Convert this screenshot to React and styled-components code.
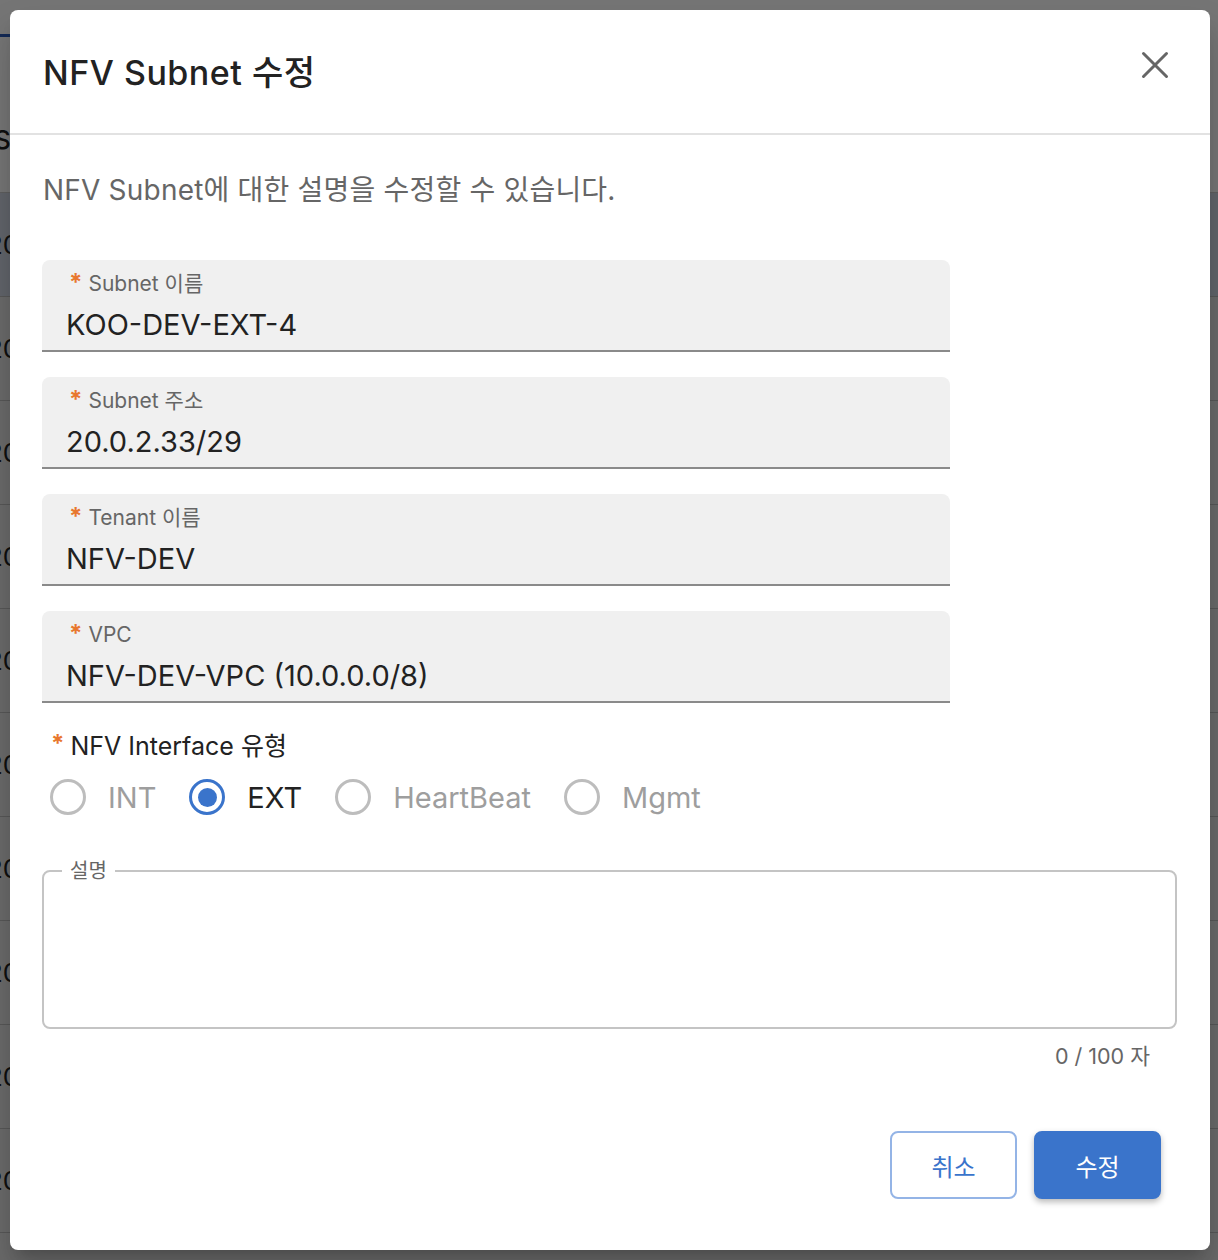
import React from 'react';
import styled, { createGlobalStyle } from 'styled-components';

const Global = createGlobalStyle`
  html, body { margin: 0; padding: 0; }
  body {
    font-family: Inter, "Noto Sans CJK KR", "Noto Sans", sans-serif;
    background: #fff;
    -webkit-font-smoothing: antialiased;
  }
  * { box-sizing: border-box; }
`;

/* ---------- page behind the dialog ---------- */
const Page = styled.div`
  position: relative;
  width: 1218px;
  height: 1260px;
  overflow: hidden;
  background: #fff;
`;

const TabBar = styled.div`
  height: 100px;
  padding-top: 34px;
`;

const TabUnderline = styled.div`
  width: 12px;
  height: 3px;
  background: #2a5bb8;
`;

const TableHead = styled.div`
  height: 93px;
  padding-top: 24px;
  font-size: 26px;
  line-height: 32px;
  font-weight: 500;
  color: #222;
  border-bottom: 1px solid #ccc;
  & > span { display: inline-block; margin-left: -6px; }
`;

const TableRow = styled.div`
  height: 104px;
  display: flex;
  align-items: center;
  background: ${p => (p.$selected ? '#d3d9e6' : '#e6e6e6')};
  border-bottom: 1px solid #bdbdbd;
  font-size: 26px;
  color: #222;
  & > span { margin-left: -13px; }
`;

const Backdrop = styled.div`
  position: absolute;
  inset: 0;
  background: rgba(0, 0, 0, 0.54);
`;

/* ---------- dialog ---------- */
const Dialog = styled.div`
  position: absolute;
  top: 10px;
  left: 10px;
  width: 1200px;
  height: 1240px;
  background: #fff;
  border-radius: 8px;
  box-shadow: 0 11px 15px -7px rgba(0, 0, 0, 0.2), 0 24px 38px 3px rgba(0, 0, 0, 0.14);
  display: flex;
  flex-direction: column;
`;

const Header = styled.div`
  height: 125px;
  flex: none;
  display: flex;
  align-items: center;
  justify-content: space-between;
  padding: 0 35px 0 33px;
  border-bottom: 2px solid #e2e2e2;
`;

const Title = styled.h2`
  margin: 0 0 2px 0;
  font-size: 34px;
  font-weight: 500;
  color: #222;
  letter-spacing: 0.5px;
`;

const CloseButton = styled.button`
  width: 40px;
  height: 40px;
  border: none;
  background: transparent;
  padding: 0;
  margin-top: -14px;
  display: flex;
  align-items: center;
  justify-content: center;
  cursor: pointer;
`;

const Body = styled.div`
  flex: 1;
  display: flex;
  flex-direction: column;
  padding: 36px 33px 0 32px;
`;

const Intro = styled.p`
  margin: 0 0 51px 1px;
  font-size: 28px;
  line-height: 38px;
  color: #666;
  letter-spacing: 0.2px;
`;

const FieldList = styled.div`
  display: flex;
  flex-direction: column;
  gap: 25px;
  width: 908px;
`;

const FilledField = styled.div`
  height: 92px;
  background: #f0f0f0;
  border-radius: 8px 8px 0 0;
  border-bottom: 2px solid #8a8a8a;
  padding: 12px 24px 0 24px;
  display: flex;
  flex-direction: column;
  gap: 12px;
`;

const FieldLabel = styled.div`
  display: flex;
  align-items: flex-start;
  font-size: 21px;
  line-height: 24px;
  color: #666;
  white-space: nowrap;
`;

const Star = styled.span`
  color: #e8772e;
  font-weight: 700;
  margin: ${p => p.$top || -1}px ${p => p.$gap || 6}px 0 ${p => p.$indent || 3}px;
  font-size: ${p => p.$size || 24}px;
  line-height: 1;
`;

const FieldValue = styled.div`
  font-size: 29px;
  line-height: 34px;
  color: #222;
  white-space: nowrap;
`;

const GroupLabel = styled.div`
  display: flex;
  align-items: flex-start;
  margin-top: 28px;
  font-size: 25px;
  line-height: 30px;
  color: #222;
  padding-left: 6px;
`;

const RadioRow = styled.div`
  margin-top: 18px;
  display: flex;
  align-items: center;
  gap: 33px;
  padding-left: 8px;
  height: 36px;
`;

const RadioItem = styled.label`
  display: flex;
  align-items: center;
  gap: 22px;
  font-size: 29px;
  color: ${p => (p.$active ? '#222' : '#9e9e9e')};
  cursor: pointer;
`;

const RadioCircle = styled.span`
  width: 36px;
  height: 36px;
  border-radius: 50%;
  border: 3.5px solid ${p => (p.$checked ? '#3a74cb' : '#bdbdbd')};
  display: flex;
  align-items: center;
  justify-content: center;
  flex: none;
  &::after {
    content: '';
    width: 19px;
    height: 19px;
    border-radius: 50%;
    background: #3a74cb;
    display: ${p => (p.$checked ? 'block' : 'none')};
  }
`;

const TextAreaBox = styled.fieldset`
  margin: 44px 0 0 0;
  padding: 0;
  height: 170px;
  border: 2px solid #c4c4c4;
  border-radius: 8px;
  width: 1135px;
`;

const Legend = styled.legend`
  margin-left: 18px;
  padding: 0 8px;
  font-size: 20px;
  line-height: 24px;
  color: #666;
`;

const Counter = styled.div`
  width: 1135px;
  margin-top: 14px;
  padding-right: 27px;
  text-align: right;
  font-size: 21.5px;
  line-height: 26px;
  color: #666;
`;

const Actions = styled.div`
  margin-top: 62px;
  display: flex;
  justify-content: flex-end;
  gap: 17px;
  padding-right: 16px;
`;

const Button = styled.button`
  width: 127px;
  height: 68px;
  border-radius: 8px;
  font-family: inherit;
  font-size: 24px;
  cursor: pointer;
  border: 2px solid ${p => (p.$primary ? '#3a74cb' : '#94b4e6')};
  background: ${p => (p.$primary ? '#3a74cb' : '#fff')};
  color: ${p => (p.$primary ? '#fff' : '#3a74cb')};
  box-shadow: ${p => (p.$primary ? '0 3px 6px rgba(0,0,0,0.28)' : 'none')};
`;

const fields = [
  { label: 'Subnet 이름', value: 'KOO-DEV-EXT-4' },
  { label: 'Subnet 주소', value: '20.0.2.33/29' },
  { label: 'Tenant 이름', value: 'NFV-DEV' },
  { label: 'VPC', value: 'NFV-DEV-VPC (10.0.0.0/8)' },
];

const radios = [
  { label: 'INT', checked: false },
  { label: 'EXT', checked: true },
  { label: 'HeartBeat', checked: false },
  { label: 'Mgmt', checked: false },
];

export default function App() {
  return (
    <Page>
      <Global />
      <TabBar>
        <TabUnderline />
      </TabBar>
      <TableHead><span>Su</span></TableHead>
      {Array.from({ length: 11 }).map((_, i) => (
        <TableRow key={i} $selected={i === 0}><span>20</span></TableRow>
      ))}
      <Backdrop />
      <Dialog role="dialog">
        <Header>
          <Title>NFV Subnet 수정</Title>
          <CloseButton aria-label="close">
            <svg width="30" height="30" viewBox="0 0 30 30">
              <path d="M3.5 3.5 L26.5 26.5 M26.5 3.5 L3.5 26.5" stroke="#666" strokeWidth="3" strokeLinecap="round" fill="none" />
            </svg>
          </CloseButton>
        </Header>
        <Body>
          <Intro>NFV Subnet에 대한 설명을 수정할 수 있습니다.</Intro>
          <FieldList>
            {fields.map(f => (
              <FilledField key={f.label}>
                <FieldLabel><Star>*</Star>{f.label}</FieldLabel>
                <FieldValue>{f.value}</FieldValue>
              </FilledField>
            ))}
          </FieldList>
          <GroupLabel><Star $indent={3} $size={24} $top={1} $gap={6}>*</Star>NFV Interface 유형</GroupLabel>
          <RadioRow>
            {radios.map(r => (
              <RadioItem key={r.label} $active={r.checked}>
                <RadioCircle $checked={r.checked} />
                {r.label}
              </RadioItem>
            ))}
          </RadioRow>
          <TextAreaBox>
            <Legend>설명</Legend>
          </TextAreaBox>
          <Counter>0 / 100 자</Counter>
          <Actions>
            <Button>취소</Button>
            <Button $primary>수정</Button>
          </Actions>
        </Body>
      </Dialog>
    </Page>
  );
}
